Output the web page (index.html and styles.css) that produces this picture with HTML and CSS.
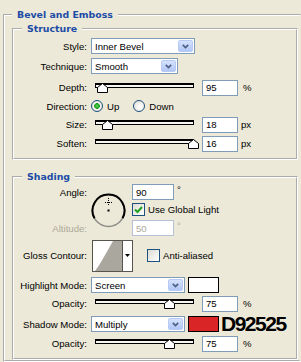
FILE: index.html
```html
<!DOCTYPE html>
<html>
<head>
<meta charset="utf-8">
<link rel="stylesheet" href="styles.css">
</head>
<body>
<fieldset class="group outer">
  <legend class="title">Bevel and Emboss</legend>

  <fieldset class="group inner structure">
    <legend class="title">Structure</legend>

    <div class="row r-style">
      <span class="lbl">Style:</span>
      <div class="combo w-style"><span>Inner Bevel</span><span class="combo-btn"><svg width="7" height="5" viewBox="0 0 7 5"><polyline points="0.8,0.8 3.5,3.6 6.2,0.8" fill="none" stroke="#4D6185" stroke-width="1.7"/></svg></span></div>
    </div>

    <div class="row r-tech">
      <span class="lbl">Technique:</span>
      <div class="combo w-tech"><span>Smooth</span><span class="combo-btn"><svg width="7" height="5" viewBox="0 0 7 5"><polyline points="0.8,0.8 3.5,3.6 6.2,0.8" fill="none" stroke="#4D6185" stroke-width="1.7"/></svg></span></div>
    </div>

    <div class="row r-depth">
      <span class="lbl">Depth:</span>
      <div class="slider"><div class="track"></div><svg class="thumb" style="left:2px" width="11" height="10" viewBox="0 0 11 10"><path d="M0.5 9.5 V4.5 L5.5 0.5 L10.5 4.5 V9.5 Z" fill="#fff" stroke="#000"/></svg></div>
      <div class="field">95</div><span class="unit">%</span>
    </div>

    <div class="row r-dir">
      <span class="lbl">Direction:</span>
      <span class="radio on"></span><span class="rtext">Up</span>
      <span class="radio second"></span><span class="rtext">Down</span>
    </div>

    <div class="row r-size">
      <span class="lbl">Size:</span>
      <div class="slider"><div class="track"></div><svg class="thumb" style="left:7px" width="11" height="10" viewBox="0 0 11 10"><path d="M0.5 9.5 V4.5 L5.5 0.5 L10.5 4.5 V9.5 Z" fill="#fff" stroke="#000"/></svg></div>
      <div class="field">18</div><span class="unit px">px</span>
    </div>

    <div class="row r-soft">
      <span class="lbl">Soften:</span>
      <div class="slider"><div class="track"></div><svg class="thumb" style="left:93px" width="11" height="10" viewBox="0 0 11 10"><path d="M0.5 9.5 V4.5 L5.5 0.5 L10.5 4.5 V9.5 Z" fill="#fff" stroke="#000"/></svg></div>
      <div class="field">16</div><span class="unit px">px</span>
    </div>
  </fieldset>

  <fieldset class="group inner shading">
    <legend class="title">Shading</legend>

    <div class="angle-grid">
      <span class="lbl g-angle">Angle:</span>
      <svg class="dial" width="36" height="36" viewBox="0 0 36 36">
        <circle cx="17.5" cy="17.5" r="16" fill="none" stroke="#8E8E88" stroke-width="1.5"/>
        <path d="M31.5 25.3 A16 16 0 1 0 3.5 25.3" fill="none" stroke="#000" stroke-width="2"/>
        <line x1="17.5" y1="5" x2="17.5" y2="13" stroke="#000" stroke-width="1" stroke-dasharray="1 1"/>
        <line x1="14" y1="9.5" x2="21" y2="9.5" stroke="#000" stroke-width="1" stroke-dasharray="1 1"/>
        <rect x="16.5" y="16.5" width="2" height="2" fill="#000"/>
      </svg>
      <div class="g-afield"><div class="field wide">90</div><span class="deg">°</span></div>
      <div class="g-global"><span class="check"><svg width="11" height="11" viewBox="0 0 11 11"><path d="M2 5.5 L4.5 8 L9 3" fill="none" stroke="#21A121" stroke-width="2"/></svg></span><span class="ctext">Use Global Light</span></div>
      <span class="lbl dis g-alt">Altitude:</span>
      <div class="g-altfield"><div class="field wide dis">50</div><span class="deg dis">°</span></div>
    </div>

    <div class="row r-gloss">
      <span class="lbl">Gloss Contour:</span>
      <div class="contour">
        <div class="contour-prev"><svg width="29" height="30" viewBox="0 0 29 30"><path d="M2 30 C 8 22, 13 12, 20 0 L 29 0 L 29 30 Z" fill="#A9A79E"/></svg></div>
        <div class="contour-arrow"><svg width="5" height="3" viewBox="0 0 5 3"><path d="M0 0 H5 L2.5 3 Z" fill="#000"/></svg></div>
      </div>
      <span class="check blank"></span><span class="ctext">Anti-aliased</span>
    </div>

    <div class="row r-hl">
      <span class="lbl">Highlight Mode:</span>
      <div class="combo w-mode"><span>Screen</span><span class="combo-btn"><svg width="7" height="5" viewBox="0 0 7 5"><polyline points="0.8,0.8 3.5,3.6 6.2,0.8" fill="none" stroke="#4D6185" stroke-width="1.7"/></svg></span></div>
      <span class="swatch white"></span>
    </div>

    <div class="row r-op1">
      <span class="lbl">Opacity:</span>
      <div class="slider"><div class="track"></div><svg class="thumb" style="left:69px" width="11" height="10" viewBox="0 0 11 10"><path d="M0.5 9.5 V4.5 L5.5 0.5 L10.5 4.5 V9.5 Z" fill="#fff" stroke="#000"/></svg></div>
      <div class="field">75</div><span class="unit">%</span>
    </div>

    <div class="row r-sh">
      <span class="lbl">Shadow Mode:</span>
      <div class="combo w-mode"><span>Multiply</span><span class="combo-btn"><svg width="7" height="5" viewBox="0 0 7 5"><polyline points="0.8,0.8 3.5,3.6 6.2,0.8" fill="none" stroke="#4D6185" stroke-width="1.7"/></svg></span></div>
      <span class="swatch red"></span>
      <span class="hex">D92525</span>
    </div>

    <div class="row r-op2">
      <span class="lbl">Opacity:</span>
      <div class="slider"><div class="track"></div><svg class="thumb" style="left:69px" width="11" height="10" viewBox="0 0 11 10"><path d="M0.5 9.5 V4.5 L5.5 0.5 L10.5 4.5 V9.5 Z" fill="#fff" stroke="#000"/></svg></div>
      <div class="field">75</div><span class="unit">%</span>
    </div>
  </fieldset>
</fieldset>
</body>
</html>
```

FILE: styles.css
```css
* { box-sizing: border-box; }
html, body { margin: 0; padding: 0; }
body {
  background: #ECE9D8;
  width: 301px;
  height: 362px;
  overflow: hidden;
  font-family: "Liberation Sans", Arial, sans-serif;
  font-size: 9.6px;
  color: #000;
}

.group {
  margin: 0;
  padding: 0;
  border: 2px groove #fff;
  min-width: 0;
}
.outer {
  margin: 8px 0 0 3px;
  width: 298px;
  border-right-color: transparent;
}
.title {
  padding: 0 5px;
  font-family: "DejaVu Sans", sans-serif;
  font-weight: bold;
  font-size: 9.4px;
  line-height: 14px;
  color: #1C4CA6;
}
.outer > .title { margin-left: 7px; }
.inner { width: 286px; margin-left: 7px; }
.inner > .title { margin-left: 8px; }
.structure { padding-bottom: 5px; }
.shading { margin-top: 10px; padding-bottom: 5px; }

.row { display: flex; align-items: center; }
.lbl {
  flex: none;
  width: 73px;
  margin-right: 4px;
  text-align: right;
  white-space: nowrap;
}
.dis { color: #ACA899; }

.r-style { height: 20px; }
.r-tech { height: 20px; }
.r-depth { height: 21px; margin-top: 1px; }
.r-dir { height: 16px; }
.r-size { height: 19px; margin-top: 1px; }
.r-soft { height: 19px; }

.r-gloss { height: 37px; }
.r-hl { height: 20px; margin-top: 1px; }
.r-op1 { height: 17px; }
.r-sh { height: 20px; margin-top: 2px; }
.r-op2 { height: 19px; }

/* combo boxes */
.combo {
  flex: none;
  display: flex;
  align-items: center;
  justify-content: space-between;
  height: 16px;
  padding: 0 1px 0 3px;
  border: 1px solid #7F9DB9;
  background: #fff;
}
.w-style { width: 104px; }
.w-tech { width: 87px; }
.w-mode { width: 94px; }
.combo-btn {
  width: 15px;
  height: 12px;
  border: 1px solid #B7CAF5;
  border-radius: 2px;
  background: linear-gradient(#D6E2FD, #B2C7F6);
  display: flex;
  align-items: center;
  justify-content: center;
}

/* sliders */
.slider {
  flex: none;
  position: relative;
  width: 99px;
  height: 10px;
  margin-left: 4px;
  margin-right: 8px;
}
.track {
  height: 5px;
  border: 1px solid #000;
  border-top-width: 2px;
  background: #F6F5F0;
}
.thumb { position: absolute; top: 0; }

/* text fields */
.field {
  flex: none;
  display: flex;
  align-items: center;
  width: 36px;
  height: 16px;
  padding: 0 3px;
  border: 1px solid #7F9DB9;
  background: #fff;
}
.field.wide { width: 42px; }
.field.dis { border-color: #B6C3D4; color: #ACA899; }
.unit { margin-left: 5px; }
.unit.px { margin-left: 3px; }
.deg { margin-left: 3px; align-self: flex-start; line-height: 12px; }

/* radios */
.radio {
  flex: none;
  width: 12px;
  height: 12px;
  border: 1px solid #1C5180;
  border-radius: 50%;
  background: radial-gradient(circle at 60% 60%, #FFFFFF 0, #F4F3EE 40%, #D9D6CA 100%);
}
.radio.on {
  background: radial-gradient(circle, #5BD35B 0, #1E9E1E 2.6px, #F8F8F4 3.1px, #F2F1EC 3.8px, #D9D6CA 6px);
}
.radio.second { margin-left: 14px; }
.rtext { margin-left: 4px; }

/* checkboxes */
.check {
  flex: none;
  display: flex;
  align-items: center;
  justify-content: center;
  width: 13px;
  height: 13px;
  border: 1px solid #1C5180;
  background: linear-gradient(135deg, #DCDBD3, #FFFFFF);
}
.ctext { margin-left: 3px; white-space: nowrap; }
.check.blank { margin-left: 14px; }

/* angle block */
.angle-grid {
  display: grid;
  grid-template-columns: 73px 37px 1fr;
  grid-template-rows: 16px 19px 18px;
  column-gap: 4px;
  align-items: center;
}
.g-angle { grid-column: 1; grid-row: 1; margin-right: 0; }
.dial { grid-column: 2; grid-row: 1 / 4; align-self: start; margin-top: 9px; }
.g-afield { grid-column: 3; grid-row: 1; display: flex; }
.g-global { grid-column: 3; grid-row: 2; display: flex; align-items: center; }
.g-alt { grid-column: 1; grid-row: 3; margin-right: 0; }
.g-altfield { grid-column: 3; grid-row: 3; display: flex; }

/* contour */
.contour { flex: none; display: flex; height: 32px; margin-left: 1px; }
.contour-prev {
  width: 31px;
  height: 32px;
  border: 1px solid #57554E;
  background: #fff;
}
.contour-prev svg { display: block; }
.contour-arrow {
  width: 10px;
  height: 32px;
  border: 1px solid #57554E;
  border-left: none;
  background: #fff;
  display: flex;
  align-items: center;
  justify-content: center;
}

/* swatches */
.swatch {
  flex: none;
  width: 31px;
  height: 16px;
  margin-left: 3px;
  border: 1px solid #000;
}
.swatch.white { background: #fff; }
.swatch.red { background: #D92525; }
.hex {
  margin-left: 2px;
  font-family: "Liberation Sans", Arial, sans-serif;
  font-weight: bold;
  font-size: 21px;
  letter-spacing: -1.5px;
  line-height: 16px;
}
```
